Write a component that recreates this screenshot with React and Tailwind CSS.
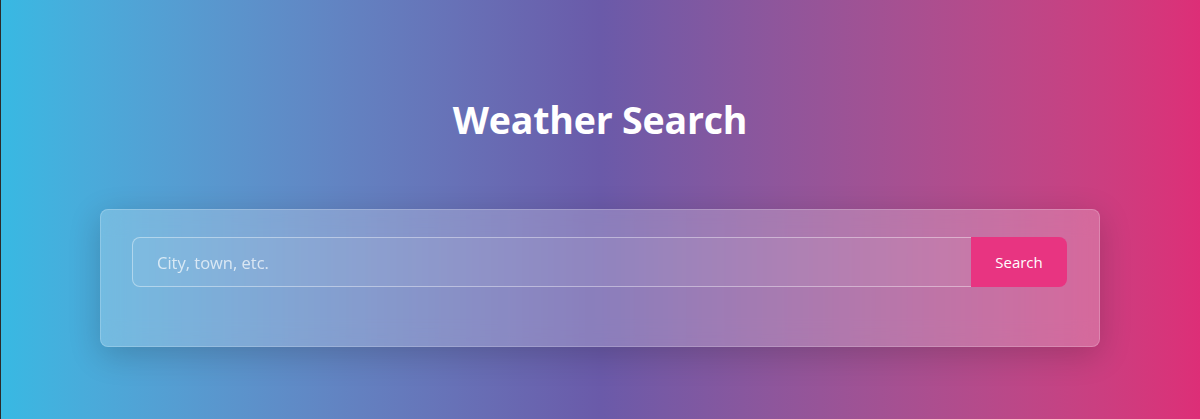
import React, { useState } from 'react';

const App = () => {
  const [query, setQuery] = useState('');

  return (
    <div className="h-[419px] w-full shadow-[inset_1px_0_0_#2b2b2b] bg-gradient-to-r from-[#37b9e3] via-[#6a5aa9] to-[#dd2e77] font-['Segoe_UI','Open_Sans','Noto_Sans',sans-serif] overflow-hidden">
      <div className="pt-[97px] flex flex-col items-center">
        <h1 className="text-[37.5px] leading-[46px] font-bold text-white tracking-[-0.2px]">Weather Search</h1>
        <div className="mt-[66px] w-[1000px] rounded-lg border border-white/20 bg-white/[0.22] backdrop-blur-md shadow-[0_8px_32px_rgba(0,0,0,0.18)] pl-[31px] pr-8 pt-[27px] pb-[59px]">
          <form onSubmit={(e) => e.preventDefault()} className="flex">
            <input
              type="text"
              value={query}
              onChange={(e) => setQuery(e.target.value)}
              placeholder="City, town, etc."
              className="flex-1 h-[50px] rounded-l-lg border border-r-0 border-white/40 bg-white/5 px-6 text-[16.5px] text-white placeholder:text-white/70 focus:outline-none"
            />
            <button
              type="submit"
              className="h-[50px] w-[96px] rounded-r-lg bg-[#e83481] text-[15px] text-white"
            >
              Search
            </button>
          </form>
        </div>
      </div>
    </div>
  );
};

export default App;
